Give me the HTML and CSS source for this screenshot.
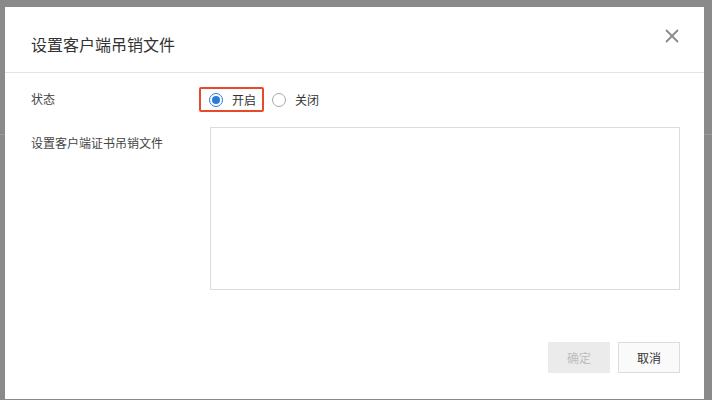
FILE: index.html
```html
<!DOCTYPE html>
<html lang="zh">
<head>
<meta charset="utf-8">
<link rel="stylesheet" href="styles.css">
</head>
<body>
<div class="backdrop">
  <div class="page-line"></div>
  <div class="modal">
    <div class="modal-header">
      <div class="modal-title">设置客户端吊销文件</div>
      <button class="close" aria-label="关闭">
        <svg width="14" height="14" viewBox="0 0 14 14"><path d="M1 1 L13 13 M13 1 L1 13" stroke="#8a8a8a" stroke-width="1.8" fill="none"/></svg>
      </button>
    </div>
    <div class="modal-body">
      <div class="form-row row-status">
        <div class="label">状态</div>
        <div class="control radios">
          <label class="radio-item highlight"><span class="radio checked"></span><span class="radio-text">开启</span></label>
          <label class="radio-item"><span class="radio"></span><span class="radio-text">关闭</span></label>
        </div>
      </div>
      <div class="form-row row-file">
        <div class="label label-top">设置客户端证书吊销文件</div>
        <div class="control"><textarea class="textarea"></textarea></div>
      </div>
    </div>
    <div class="modal-footer">
      <button class="btn btn-disabled" disabled>确定</button>
      <button class="btn btn-default">取消</button>
    </div>
  </div>
</div>
</body>
</html>
```

FILE: styles.css
```css
* { box-sizing: border-box; }
html, body { margin: 0; padding: 0; }
body {
  width: 712px;
  height: 400px;
  overflow: hidden;
  background: #8a8a8a;
  font-family: "Noto Sans CJK SC", "Noto Sans", sans-serif;
}
.backdrop {
  position: relative;
  width: 712px;
  height: 400px;
  padding: 7px 8px 0 5px;
}
.page-line {
  position: absolute;
  left: 0;
  right: 0;
  top: 134px;
  height: 1px;
  background: #9a9a9a;
}
.modal {
  position: relative;
  width: 699px;
  height: 392px;
  background: #fff;
  display: flex;
  flex-direction: column;
}
.modal-header {
  height: 66px;
  border-bottom: 1px solid #e3e3e3;
  padding: 28px 24px 0 26px;
  display: flex;
  justify-content: space-between;
  align-items: flex-start;
}
.modal-title {
  font-size: 16px;
  line-height: 18px;
  color: #333;
}
.close {
  border: 0;
  background: none;
  padding: 0;
  margin: -6px 1px 0 0;
  width: 14px;
  height: 14px;
  display: flex;
}
.modal-body {
  padding: 14px 24px 0 26px;
  flex: 1;
}
.form-row {
  display: grid;
  grid-template-columns: 179px 470px;
}
.row-status {
  height: 40px;
  align-items: start;
}
.label {
  font-size: 12px;
  line-height: 14px;
  color: #444;
}
.row-status .label { padding-top: 5px; }
.label-top { padding-top: 9px; }
.radios {
  display: flex;
  align-items: center;
}
.radio-item {
  display: flex;
  align-items: center;
  font-size: 12px;
  color: #333;
}
.radio-item.highlight {
  border: 2px solid #e8492b;
  border-radius: 2px;
  height: 25px;
  width: 65px;
  margin-left: -11px;
  padding-left: 8px;
  margin-right: 8px;
}
.radio {
  width: 14px;
  height: 14px;
  border-radius: 50%;
  border: 1px solid #a8a8a8;
  background: #fff;
  display: flex;
  align-items: center;
  justify-content: center;
  margin-right: 9px;
}
.radio.checked {
  border-color: #2b7ad8;
}
.radio.checked::after {
  content: "";
  width: 8px;
  height: 8px;
  border-radius: 50%;
  background: #2b7ad8;
}
.radio-text { line-height: 14px; }
.textarea {
  display: block;
  width: 470px;
  height: 163px;
  border: 1px solid #dcdcdc;
  border-radius: 0;
  resize: none;
  margin: 0;
  padding: 0;
  background: #fff;
}
.modal-footer {
  display: flex;
  justify-content: flex-end;
  gap: 8px;
  padding: 0 24px 0 0;
  height: 57px;
}
.btn {
  width: 62px;
  height: 31px;
  font-family: "Noto Sans CJK SC", "Noto Sans", sans-serif;
  font-size: 12px;
  border-radius: 0;
  padding: 0;
}
.btn-disabled {
  background: #ebebeb;
  border: 1px solid #ebebeb;
  color: #bdbdbd;
}
.btn-default {
  background: #fafafa;
  border: 1px solid #dcdcdc;
  color: #333;
}
```
